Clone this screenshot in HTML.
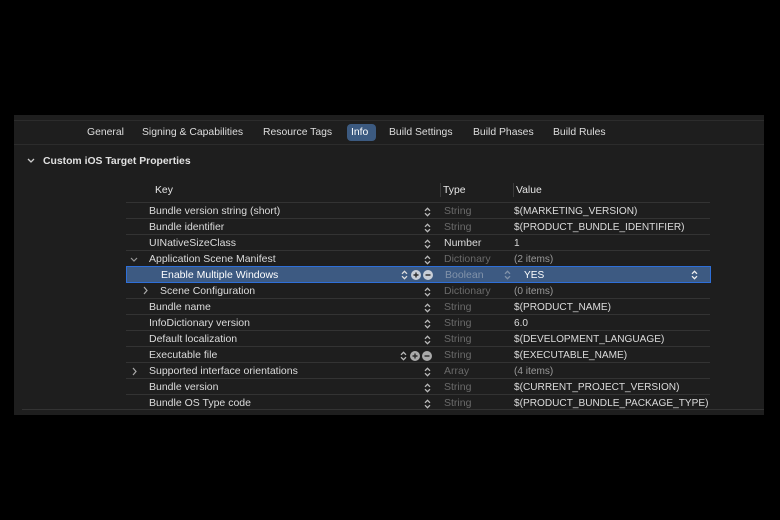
<!DOCTYPE html>
<html><head><meta charset="utf-8"><style>
*{margin:0;padding:0;box-sizing:border-box}
body{width:780px;height:520px;background:#000;font-family:"Liberation Sans",sans-serif;font-size:10.5px;color:#dcdcdc;position:relative;overflow:hidden}
.panel{position:absolute;left:14px;top:115px;width:750px;height:300px;background:#1e1e1e}
.topline{position:absolute;left:14px;top:120px;width:750px;height:1px;background:#2c2c2c}
.tabsep{position:absolute;left:14px;top:144px;width:750px;height:1px;background:#2c2c2c}
.tab{position:absolute;top:127px;font-size:10.4px;color:#dedede}
.pill{position:absolute;left:347px;top:124px;width:29px;height:17px;background:#3c5a80;border-radius:4px}
.sec{position:absolute;left:43px;top:156px;font-weight:bold;font-size:10.4px;color:#e0e0e0}
.hdr{position:absolute;top:185px;font-size:10.4px;color:#e6e6e6}
.vdiv{position:absolute;top:183px;width:1px;height:14px;background:#3a3a3a}
.row{position:absolute;left:126px;width:584px;height:16px;border-top:1px solid #333}
.row>span,.row>svg{position:absolute;white-space:nowrap}
.row>span{top:1.5px}
.k{left:23px}.k2{left:34px}
.t{left:318px;color:#6a6a6a}.tw{left:318px;color:#dcdcdc}
.row>span.v,.row>span.vg{left:388px;font-size:10.1px;top:3px}.vg{color:#9a9a9a}
.st{left:298px;top:4px}
.sel{background:#3d5a82;border:1px solid #2e6fd8;left:126px;width:585px}
.bline{position:absolute;left:22px;top:409px;width:742px;height:1px;background:#333}
</style></head><body>
<svg width="0" height="0" style="position:absolute">
<defs>
<symbol id="stp" viewBox="0 0 7 10"><path d="M1 3.8 L3.5 1.3 L6 3.8 M1 6.2 L3.5 8.7 L6 6.2" fill="none" stroke="currentColor" stroke-width="1.3"/></symbol>
<symbol id="pl" viewBox="0 0 10 10"><circle cx="5" cy="5" r="5" fill="currentColor"/><path d="M2.5 5H7.5M5 2.5V7.5" stroke="#2a2a2a" stroke-width="1.4"/></symbol>
<symbol id="mi" viewBox="0 0 10 10"><circle cx="5" cy="5" r="5" fill="currentColor"/><path d="M2.5 5H7.5" stroke="#2a2a2a" stroke-width="1.4"/></symbol>
</defs></svg>
<div class="panel"></div>
<div class="topline"></div>
<div class="pill"></div>
<div class="tab" style="left:87px">General</div>
<div class="tab" style="left:142px">Signing &amp; Capabilities</div>
<div class="tab" style="left:263px">Resource Tags</div>
<div class="tab" style="left:351px;color:#fff">Info</div>
<div class="tab" style="left:389px">Build Settings</div>
<div class="tab" style="left:473px">Build Phases</div>
<div class="tab" style="left:553px">Build Rules</div>
<div class="tabsep"></div>
<svg style="position:absolute;left:27px;top:158px" width="8" height="6"><path d="M1 1L4 4L7 1" fill="none" stroke="#ccc" stroke-width="1.3"/></svg>
<div class="sec">Custom iOS Target Properties</div>
<div class="hdr" style="left:155px">Key</div>
<div class="vdiv" style="left:440px"></div>
<div class="hdr" style="left:443px">Type</div>
<div class="vdiv" style="left:513px"></div>
<div class="hdr" style="left:516px">Value</div>

<div class="row" style="top:202px"><span class="k">Bundle version string (short)</span><svg class="st" width="7" height="10" style="color:#bbb"><use href="#stp"/></svg><span class="t">String</span><span class="v">$(MARKETING_VERSION)</span></div>
<div class="row" style="top:218px"><span class="k">Bundle identifier</span><svg class="st" width="7" height="10" style="color:#bbb"><use href="#stp"/></svg><span class="t">String</span><span class="v">$(PRODUCT_BUNDLE_IDENTIFIER)</span></div>
<div class="row" style="top:234px"><span class="k">UINativeSizeClass</span><svg class="st" width="7" height="10" style="color:#bbb"><use href="#stp"/></svg><span class="tw">Number</span><span class="v">1</span></div>
<div class="row" style="top:250px"><svg style="left:4px;top:6px" width="8" height="6"><path d="M1 1L4 4L7 1" fill="none" stroke="#999" stroke-width="1.2"/></svg><span class="k">Application Scene Manifest</span><svg class="st" width="7" height="10" style="color:#bbb"><use href="#stp"/></svg><span class="t">Dictionary</span><span class="vg">(2 items)</span></div>
<div class="row sel" style="top:266px;height:17px"><span class="k2" style="color:#fff;top:1.5px">Enable Multiple Windows</span><svg style="left:274px;top:3px;color:#ddd" width="7" height="10"><use href="#stp"/></svg><svg style="left:284px;top:3px;color:#c8ced8" width="10" height="10"><use href="#pl"/></svg><svg style="left:296px;top:3px;color:#c8ced8" width="10" height="10"><use href="#mi"/></svg><span class="t" style="color:#8293aa;top:1.5px">Boolean</span><svg style="left:377px;top:3px;color:#8293aa" width="7" height="10"><use href="#stp"/></svg><span class="v" style="left:397px;color:#fff;top:2.5px">YES</span><svg style="left:564px;top:3px;color:#eee" width="7" height="10"><use href="#stp"/></svg></div>
<div class="row" style="top:282px;border-top:none;height:17px"><svg style="left:17px;top:4px" width="6" height="9"><path d="M1 1L4 4.5L1 8" fill="none" stroke="#aaa" stroke-width="1.2"/></svg><span class="k2" style="top:2.5px">Scene Configuration</span><svg class="st" width="7" height="10" style="color:#bbb;top:5px"><use href="#stp"/></svg><span class="t" style="top:2.5px">Dictionary</span><span class="vg" style="top:4px">(0 items)</span></div>
<div class="row" style="top:298px"><span class="k">Bundle name</span><svg class="st" width="7" height="10" style="color:#bbb"><use href="#stp"/></svg><span class="t">String</span><span class="v">$(PRODUCT_NAME)</span></div>
<div class="row" style="top:314px"><span class="k">InfoDictionary version</span><svg class="st" width="7" height="10" style="color:#bbb"><use href="#stp"/></svg><span class="t">String</span><span class="v">6.0</span></div>
<div class="row" style="top:330px"><span class="k">Default localization</span><svg class="st" width="7" height="10" style="color:#bbb"><use href="#stp"/></svg><span class="t">String</span><span class="v">$(DEVELOPMENT_LANGUAGE)</span></div>
<div class="row" style="top:346px"><span class="k">Executable file</span><svg style="left:274px;top:4px;color:#bbb" width="7" height="10"><use href="#stp"/></svg><svg style="left:284px;top:4px;color:#aaa" width="10" height="10"><use href="#pl"/></svg><svg style="left:296px;top:4px;color:#aaa" width="10" height="10"><use href="#mi"/></svg><span class="t">String</span><span class="v">$(EXECUTABLE_NAME)</span></div>
<div class="row" style="top:362px"><svg style="left:6px;top:4px" width="6" height="9"><path d="M1 1L4 4.5L1 8" fill="none" stroke="#aaa" stroke-width="1.2"/></svg><span class="k">Supported interface orientations</span><svg class="st" width="7" height="10" style="color:#bbb"><use href="#stp"/></svg><span class="t">Array</span><span class="vg">(4 items)</span></div>
<div class="row" style="top:378px"><span class="k">Bundle version</span><svg class="st" width="7" height="10" style="color:#bbb"><use href="#stp"/></svg><span class="t">String</span><span class="v">$(CURRENT_PROJECT_VERSION)</span></div>
<div class="row" style="top:394px"><span class="k">Bundle OS Type code</span><svg class="st" width="7" height="10" style="color:#bbb"><use href="#stp"/></svg><span class="t">String</span><span class="v">$(PRODUCT_BUNDLE_PACKAGE_TYPE)</span></div>
<div class="bline"></div>
</body></html>
